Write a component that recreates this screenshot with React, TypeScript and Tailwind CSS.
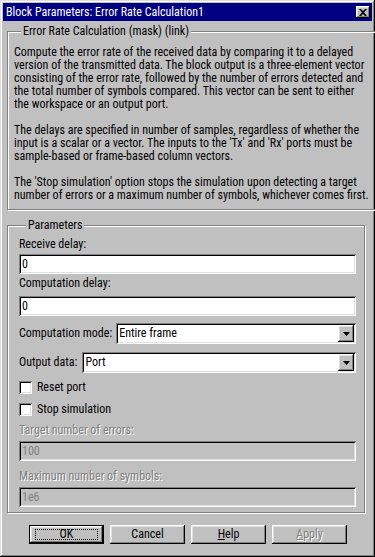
import React from 'react';

// Win9x bevels
const RAISED = 'shadow-[inset_-1px_-1px_0_#000,inset_1px_1px_0_#fff,inset_-2px_-2px_0_#808080,inset_2px_2px_0_#dfdfdf]';
const SUNKEN = 'shadow-[inset_1px_1px_0_#808080,inset_-1px_-1px_0_#fff,inset_2px_2px_0_#000,inset_-2px_-2px_0_#dfdfdf]';
const DISABLED_TEXT = 'text-[#808080] [text-shadow:1px_1px_0_#fff]';

const description: string[][] = [
  [
    'Compute the error rate of the received data by comparing it to a delayed',
    'version of the transmitted data. The block output is a three-element vector',
    'consisting of the error rate, followed by the number of errors detected and',
    'the total number of symbols compared. This vector can be sent to either',
    'the workspace or an output port.',
  ],
  [
    'The delays are specified in number of samples, regardless of whether the',
    "input is a scalar or a vector. The inputs to the 'Tx' and 'Rx' ports must be",
    'sample-based or frame-based column vectors.',
  ],
  [
    "The 'Stop simulation' option stops the simulation upon detecting a target",
    'number of errors or a maximum number of symbols, whichever comes first.',
  ],
];

const GroupBox: React.FC<{ title: string; className?: string; children: React.ReactNode }> = ({ title, className = '', children }) => (
  <fieldset className={`ml-[4px] w-[358px] border border-[#808080] shadow-[inset_1px_1px_0_#fff,1px_1px_0_#fff] ${className}`}>
    <legend className="ml-[7px] bg-[#c0c0c0] px-[2px] leading-[13px]">{title}</legend>
    {children}
  </fieldset>
);

const TextField: React.FC<{ value: string; disabled?: boolean; className?: string }> = ({ value, disabled, className = '' }) => (
  <div
    className={`flex h-[20px] w-[337px] items-center pl-[3px] ${SUNKEN} ${
      disabled ? 'bg-[#c0c0c0] text-[#808080]' : 'bg-white text-black'
    } ${className}`}
  >
    {value}
  </div>
);

const Select: React.FC<{ value: string; className?: string }> = ({ value, className = '' }) => (
  <div className={`flex h-[21px] flex-1 items-center bg-white p-[2px] ${SUNKEN} ${className}`}>
    <span className="flex-1 pl-[1px]">{value}</span>
    <div className={`flex h-[17px] w-[16px] items-center justify-center bg-[#c0c0c0] ${RAISED}`}>
      <svg width="7" height="4" viewBox="0 0 7 4">
        <path d="M0 0h7L3.5 4z" fill="#000" />
      </svg>
    </div>
  </div>
);

const Checkbox: React.FC<{ label: string; className?: string }> = ({ label, className = '' }) => (
  <div className={`flex h-[13px] items-center gap-[5px] ${className}`}>
    <div className={`h-[13px] w-[13px] bg-white ${SUNKEN}`} />
    <span className="leading-[13px]">{label}</span>
  </div>
);

const Button: React.FC<{ children: React.ReactNode; isDefault?: boolean; disabled?: boolean }> = ({ children, isDefault, disabled }) => (
  <div className={`h-[19px] w-[75px] bg-[#c0c0c0] ${isDefault ? 'border border-black' : ''}`}>
    <div className={`flex h-full w-full items-center justify-center ${RAISED} ${disabled ? DISABLED_TEXT : ''}`}>
      {isDefault ? (
        <div className="flex h-[11px] w-[63px] items-center justify-center border border-dotted border-black">{children}</div>
      ) : (
        children
      )}
    </div>
  </div>
);

export default function App() {
  return (
    <div
      className={`flex h-[557px] w-[375px] flex-col bg-[#c0c0c0] p-[3px] text-[12px] leading-[13px] text-black font-['Roboto',sans-serif] [font-stretch:condensed] shadow-[inset_-1px_-1px_0_#000,inset_1px_1px_0_#dfdfdf,inset_-2px_-2px_0_#808080,inset_2px_2px_0_#fff]`}
    >
      {/* Title bar */}
      <div className="flex h-[18px] items-center justify-between bg-[#000080] pl-[3px] pr-[2px]">
        <span className="text-[12px] text-white">Block Parameters: Error Rate Calculation1</span>
        <div className={`flex h-[12px] w-[14px] items-center justify-center bg-[#c0c0c0] ${RAISED}`}>
          <svg width="8" height="7" viewBox="0 0 8 7">
            <path d="M0 0h2l2 2 2-2h2L5 3.5 8 7H6L4 5 2 7H0l3-3.5z" fill="#000" />
          </svg>
        </div>
      </div>

      {/* Mask description */}
      <GroupBox title="Error Rate Calculation (mask) (link)" className="mt-[4px] px-[6px] pb-[7px] pt-[8px]">
        {description.map((para, i) => (
          <p key={i} className={`whitespace-nowrap ${i > 0 ? 'mt-[13px]' : ''}`}>
            {para.map((l, j) => (
              <React.Fragment key={j}>
                {l}
                {j < para.length - 1 && <br />}
              </React.Fragment>
            ))}
          </p>
        ))}
      </GroupBox>

      {/* Parameters */}
      <GroupBox title="Parameters" className="mt-[9px] pl-[11px] pr-[7px] pb-[5px] pt-[6px]">
        <div>Receive delay:</div>
        <TextField value="0" className="mt-[3px]" />
        <div className="mt-[3px]">Computation delay:</div>
        <TextField value="0" className="mt-[6px]" />

        <div className="mt-[7px] flex w-[337px] items-center gap-[4px]">
          <span>Computation mode:</span>
          <Select value="Entire frame" />
        </div>
        <div className="mt-[8px] flex w-[337px] items-center gap-[5px]">
          <span>Output data:</span>
          <Select value="Port" />
        </div>

        <Checkbox label="Reset port" className="mt-[8px]" />
        <Checkbox label="Stop simulation" className="mt-[9px]" />

        <div className={`mt-[8px] ${DISABLED_TEXT}`}>Target number of errors:</div>
        <TextField value="100" disabled className="mt-[4px]" />
        <div className={`mt-[9px] ${DISABLED_TEXT}`}>Maximum number of symbols:</div>
        <TextField value="1e6" disabled className="mt-[4px]" />
      </GroupBox>

      {/* Buttons */}
      <div className="mt-[12px] flex justify-center gap-[6px] pl-[1px]">
        <Button isDefault>OK</Button>
        <Button>Cancel</Button>
        <Button>
          <span>
            <span className="underline">H</span>elp
          </span>
        </Button>
        <Button disabled>
          <span>
            <span className="underline">A</span>pply
          </span>
        </Button>
      </div>
    </div>
  );
}
